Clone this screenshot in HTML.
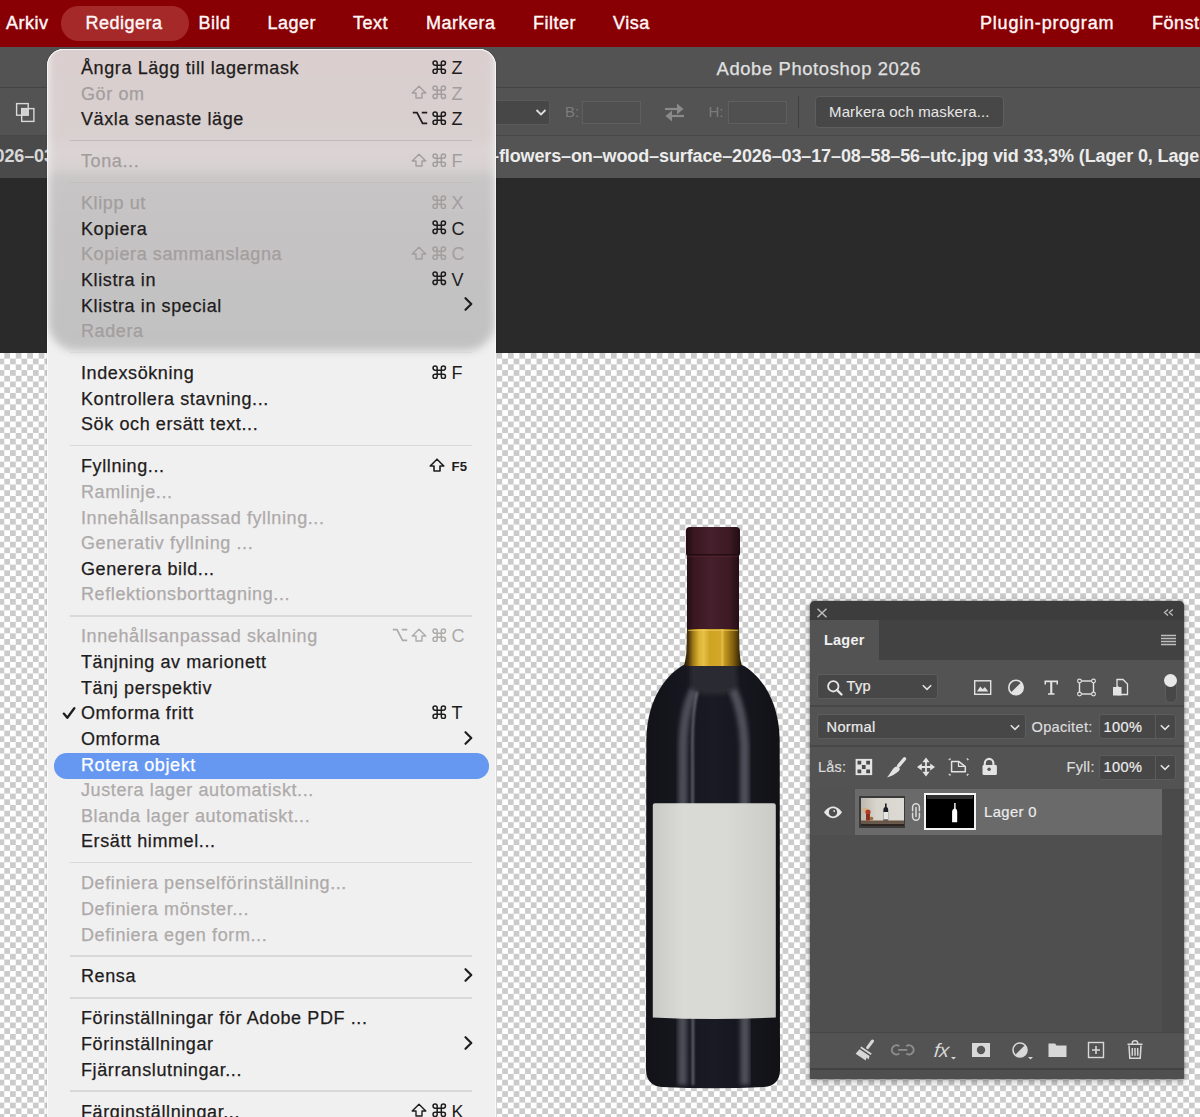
<!DOCTYPE html>
<html><head><meta charset="utf-8"><title>Photoshop</title>
<style>
*{margin:0;padding:0;box-sizing:border-box}
html,body{width:1200px;height:1117px;overflow:hidden;background:#282828}
body{position:relative;font-family:"Liberation Sans",sans-serif}
.a{position:absolute}
#menubar{left:0;top:0;width:1200px;height:47.5px;background:#890004;border-bottom:1.5px solid #6e0508}
.mb{position:absolute;top:11px;font-size:18px;line-height:24px;color:#fff7f7;letter-spacing:0.5px;white-space:nowrap;-webkit-text-stroke:0.4px #fff7f7}
#pill{left:60.5px;top:6.2px;width:128px;height:34.8px;border-radius:17.4px;background:#a52929}
#title{left:0;top:47px;width:1200px;height:41px;background:#535353;border-bottom:1.5px solid #444444}
#opts{left:0;top:88px;width:1200px;height:47.5px;background:#535353;border-bottom:1.5px solid #474747}
#tabs{left:0;top:135.5px;width:1200px;height:42.7px;background:#545454}
#canvas{left:0;top:178px;width:1200px;height:175px;background:#2a2a2a}
#checker{left:0;top:0;width:1200px;height:1117px}
#menu{left:46.5px;top:49px;width:449px;height:1100px;border-radius:17px;background:#f1f0f0;overflow:hidden;box-shadow:0 0 1.5px rgba(0,0,0,0.35)}
#rim{left:46.5px;top:49px;width:449px;height:1100px;border-radius:17px;box-shadow:inset 0 1px 0 0 rgba(255,255,255,0.75),inset 1px 0 0 0 rgba(255,255,255,0.6),inset -1px 0 0 0 rgba(255,255,255,0.6)}
.it{position:absolute;left:0;width:449px;height:0}
.it .t{position:absolute;left:34.5px;top:-19.24px;font-size:18px;line-height:26px;letter-spacing:0.6px;white-space:nowrap;-webkit-text-stroke:0.25px currentColor}
.it .k{position:absolute;top:-19.24px;font-size:18px;line-height:26px;white-space:nowrap}
.g{position:absolute}
.sep{position:absolute;left:23.5px;width:402px;height:1.5px;background:#d9d7d7}
.hl{position:absolute;left:7px;width:435px;height:25.7px;border-radius:12.5px;background:#6698f2}
</style></head><body>
<svg id="checker" class="a" width="1200" height="1117">
 <defs><pattern id="chk" patternUnits="userSpaceOnUse" x="-1.42" y="352.9" width="11.446" height="11.446">
  <rect width="11.446" height="11.446" fill="#ffffff"/>
  <rect x="5.723" width="5.723" height="5.723" fill="#cbcbcb"/>
  <rect y="5.723" width="5.723" height="5.723" fill="#cbcbcb"/>
 </pattern></defs>
 <rect x="0" y="352" width="1200" height="765" fill="url(#chk)"/>
</svg>
<div id="menubar" class="a"></div>
<div id="pill" class="a"></div>
<div class="mb" style="left:6px">Arkiv</div>
<div class="mb" style="left:85.5px">Redigera</div>
<div class="mb" style="left:198.5px">Bild</div>
<div class="mb" style="left:267.5px">Lager</div>
<div class="mb" style="left:353px">Text</div>
<div class="mb" style="left:426px">Markera</div>
<div class="mb" style="left:533px">Filter</div>
<div class="mb" style="left:613px">Visa</div>
<div class="mb" style="left:980px;letter-spacing:0.8px">Plugin-program</div>
<div class="mb" style="left:1152px">Fönster</div>

<div id="title" class="a"></div>
<div class="a" style="left:716.5px;top:57px;font-size:18.4px;line-height:24px;letter-spacing:0.62px;color:#e0e0e0;white-space:nowrap;-webkit-text-stroke:0.25px #e0e0e0">Adobe Photoshop 2026</div>
<div id="opts" class="a"></div>

<!-- options bar content -->
<svg class="a" style="left:14px;top:101px" width="23" height="23" viewBox="0 0 23 23">
 <rect x="7.7" y="7.6" width="6.5" height="6.5" fill="#cfcfcf"/>
 <rect x="2.6" y="2.6" width="11.6" height="11.6" fill="none" stroke="#d9d9d9" stroke-width="1.4"/>
 <rect x="7.7" y="7.6" width="12.2" height="12.8" fill="none" stroke="#d9d9d9" stroke-width="1.4"/>
</svg>
<div class="a" style="left:420px;top:99.7px;width:130px;height:25.5px;background:#474747;border:1px solid #5a5a5a;border-radius:3px"></div>
<svg class="a" style="left:535px;top:108px" width="12" height="9" viewBox="0 0 12 9"><path d="M1.5 2L6 6.5L10.5 2" fill="none" stroke="#dedede" stroke-width="1.8"/></svg>
<div class="a" style="left:565px;top:103px;font-size:15px;line-height:18px;color:#7c7c7c">B:</div>
<div class="a" style="left:582px;top:100.5px;width:59px;height:23px;border:1px solid #5f5f5f;background:#505050"></div>
<svg class="a" style="left:663px;top:102px" width="23" height="21" viewBox="0 0 23 21">
 <path d="M2 7H17" stroke="#8a8a8a" stroke-width="2.2"/><path d="M14 1.5L20.5 7L14 12.5Z" fill="#8a8a8a"/>
 <path d="M21 14H6" stroke="#8a8a8a" stroke-width="2.2"/><path d="M9 8.5L2.5 14L9 19.5Z" fill="#8a8a8a"/>
</svg>
<div class="a" style="left:708.5px;top:103px;font-size:15px;line-height:18px;color:#7c7c7c">H:</div>
<div class="a" style="left:728px;top:100.5px;width:58.5px;height:23px;border:1px solid #5f5f5f;background:#505050"></div>
<div class="a" style="left:798px;top:96px;width:1px;height:32px;background:#3f3f3f"></div>
<div class="a" style="left:814.5px;top:96px;width:189.5px;height:32px;background:#474747;border:1px solid #5e5e5e;border-radius:4px"></div>
<div class="a" style="left:829px;top:103px;font-size:15px;line-height:18px;letter-spacing:0.14px;color:#e8e8e8;white-space:nowrap">Markera och maskera...</div>
<div id="tabs" class="a"></div>
<div class="a" style="left:489px;top:145px;font-size:18px;line-height:22px;font-weight:700;letter-spacing:-0.12px;color:#ececec;white-space:nowrap">&#8211;flowers&#8211;on&#8211;wood&#8211;surface&#8211;2026&#8211;03&#8211;17&#8211;08&#8211;58&#8211;56&#8211;utc.jpg vid 33,3% (Lager 0, Lagermask/8)</div>
<div class="a" style="left:0;top:135.5px;width:120px;height:42.7px;background:#4a4a4a"></div>
<div class="a" style="left:-5.5px;top:145px;font-size:18px;line-height:22px;font-weight:700;letter-spacing:-0.12px;color:#d8d8d8;white-space:nowrap">026&#8211;03</div>
<div id="canvas" class="a"></div>


<svg class="a" style="left:0;top:0" width="1200" height="1117">
 <defs>
  <linearGradient id="cap" x1="0" x2="1" y1="0" y2="0">
   <stop offset="0" stop-color="#220c12"/><stop offset="0.15" stop-color="#3a1721"/><stop offset="0.45" stop-color="#46202c"/><stop offset="0.8" stop-color="#3d1a25"/><stop offset="1" stop-color="#220c12"/>
  </linearGradient>
  <linearGradient id="yel" x1="0" x2="1" y1="0" y2="0">
   <stop offset="0" stop-color="#1e1604"/><stop offset="0.08" stop-color="#4a360a"/><stop offset="0.16" stop-color="#a07a16"/><stop offset="0.26" stop-color="#dcb234"/><stop offset="0.34" stop-color="#e6c048"/><stop offset="0.45" stop-color="#cfa424"/><stop offset="0.63" stop-color="#d3a82a"/><stop offset="0.66" stop-color="#e2bf50"/><stop offset="0.7" stop-color="#c59a1e"/><stop offset="0.86" stop-color="#7a5a0e"/><stop offset="1" stop-color="#1c1404"/>
  </linearGradient>
  <linearGradient id="lab" x1="0" x2="1" y1="0" y2="0">
   <stop offset="0" stop-color="#c9cac6"/><stop offset="0.25" stop-color="#dadbd7"/><stop offset="0.6" stop-color="#d8d9d5"/><stop offset="1" stop-color="#cbccc8"/>
  </linearGradient>
  <linearGradient id="body" x1="0" x2="1" y1="0" y2="0">
   <stop offset="0" stop-color="#121218"/><stop offset="0.5" stop-color="#1a1a25"/><stop offset="1" stop-color="#111116"/>
  </linearGradient>
  <filter id="bl2" x="-50%" y="-10%" width="200%" height="120%"><feGaussianBlur stdDeviation="2.2"/></filter>
  <filter id="bl1" x="-50%" y="-10%" width="200%" height="120%"><feGaussianBlur stdDeviation="1"/></filter>
  <clipPath id="bclip"><path d="M683.7 665 C670 672 647 695 646.3 740 L646 1070 Q646.5 1085.5 662 1087 Q713 1089.5 764 1087 Q779.8 1085.5 780 1070 L779.7 740 C779 695 756 672 742 665 Z"/></clipPath>
 </defs>
 <path d="M683.7 665 C670 672 647 695 646.3 740 L646 1070 Q646.5 1085.5 662 1087 Q713 1089.5 764 1087 Q779.8 1085.5 780 1070 L779.7 740 C779 695 756 672 742 665 Z" fill="url(#body)"/>
 <g clip-path="url(#bclip)">
  <path d="M690 662 Q712 660 736 662 L738 690 Q713 700 690 690 Z" fill="#2b2a30" filter="url(#bl2)"/>
  <path d="M694 690 Q684 710 683 745 L682.5 1085" fill="none" stroke="#4e4e58" stroke-width="9" filter="url(#bl2)"/>
  <path d="M697 692 Q692 715 692.5 750 L693 1085" fill="none" stroke="#6a6a74" stroke-width="2.2" filter="url(#bl1)"/>
  <path d="M733 690 Q743 712 744.5 745 L745 1085" fill="none" stroke="#50505a" stroke-width="9" filter="url(#bl2)"/>
  
 </g>
 <path d="M687 628 L739 628 L739.5 650 Q740 660 742 666 L683.7 666 Q686 660 686.5 650 Z" fill="url(#yel)"/>
 <path d="M688 630.5 H738" stroke="#f0d060" stroke-width="1" opacity="0.6"/>
 <path d="M686 530.5 Q686 527 690 527 L736 527 Q740 527 740 530.5 L740 554 L739 556 L739 629 L687 629 L687 556 L686 554 Z" fill="url(#cap)"/>
 <path d="M687 554.8 H739" stroke="#1e0a10" stroke-width="1.3"/>
 <path d="M687 556.3 H739" stroke="#5a2a36" stroke-width="0.8" opacity="0.7"/>
 <path d="M652.8 805.5 Q652.8 803.3 655 803.3 L773.5 803.3 Q775.8 803.3 775.8 805.5 L775.8 1017.5 Q714 1020.5 652.8 1017.5 Z" fill="url(#lab)"/>
</svg>

<div class="a" style="left:809.5px;top:601.3px;width:374px;height:478.2px;border-radius:5px 5px 1.5px 1.5px;background:#535353;box-shadow:0 0 2px rgba(0,0,0,0.55),0 2px 8px rgba(0,0,0,0.3);overflow:hidden">
 <div class="a" style="left:0;top:0;width:374px;height:19px;background:#3d3d3d"></div>
 <div class="a" style="left:69px;top:19px;width:305px;height:40px;background:#424242"></div>
 <div class="a" style="left:0;top:103.7px;width:374px;height:2px;background:#474747"></div>
 <div class="a" style="left:0;top:144px;width:374px;height:2px;background:#474747"></div>
 <div class="a" style="left:0;top:187.7px;width:374px;height:243px;background:#4f4f4f"></div>
 <div class="a" style="left:0;top:187.7px;width:45px;height:46px;background:#525252"></div>
 <div class="a" style="left:45px;top:187.7px;width:307px;height:46px;background:#6a6a6a"></div>
 <div class="a" style="left:352px;top:187.7px;width:22px;height:243px;background:#4a4a4a"></div>
 <div class="a" style="left:0;top:430.5px;width:374px;height:38px;background:#535353;border-top:1.5px solid #464646;border-bottom:2px solid #424242"></div>
 <div class="a" style="left:0;top:468.5px;width:374px;height:10px;background:#4f4f4f"></div>
</div>
<svg class="a" style="left:816px;top:607px" width="12" height="12" viewBox="0 0 12 12"><path d="M1.5 1.7L10.5 10.3M10.5 1.7L1.5 10.3" stroke="#bdbdbd" stroke-width="1.5"/></svg>
<svg class="a" style="left:1163px;top:608px" width="11" height="9" viewBox="0 0 11 9"><path d="M5 1.5L1.5 4.5L5 7.5M9.8 1.5L6.3 4.5L9.8 7.5" fill="none" stroke="#bdbdbd" stroke-width="1.3"/></svg>
<div class="a" style="left:824px;top:632px;font-size:14.5px;line-height:17px;font-weight:700;color:#f0f0f0;letter-spacing:0.2px">Lager</div>
<svg class="a" style="left:1160px;top:634px" width="17" height="13" viewBox="0 0 17 13"><path d="M1 1.5H16M1 4.5H16M1 7.5H16M1 10.5H16" stroke="#bfbfbf" stroke-width="1.3"/></svg>

<div class="a" style="left:816.5px;top:673.8px;width:121px;height:25.5px;background:#474747;border:1px solid #5c5c5c;border-radius:3px"></div>
<svg class="a" style="left:826px;top:679px" width="18" height="18" viewBox="0 0 18 18"><circle cx="7.3" cy="7.3" r="5.2" fill="none" stroke="#e6e6e6" stroke-width="1.8"/><path d="M11 11L15.5 15.5" stroke="#e6e6e6" stroke-width="2.4" stroke-linecap="round"/></svg>
<div class="a" style="left:846.5px;top:678px;font-size:14.6px;line-height:17px;color:#ececec;letter-spacing:0.3px;-webkit-text-stroke:0.2px currentColor">Typ</div>
<svg class="a" style="left:921px;top:683px" width="12" height="9" viewBox="0 0 12 9"><path d="M1.8 2.2L6 6.4L10.2 2.2" fill="none" stroke="#e0e0e0" stroke-width="1.6"/></svg>
<svg class="a" style="left:972px;top:678px" width="160" height="20" viewBox="0 0 160 20">
 <rect x="2.7" y="2.8" width="16" height="13.5" fill="none" stroke="#e3e3e3" stroke-width="1.4"/>
 <path d="M5 13.5L8.3 8.5L10.7 11.3L12.8 9L16.3 13.5Z" fill="#e3e3e3"/>
 <circle cx="44" cy="9.5" r="7.2" fill="none" stroke="#e3e3e3" stroke-width="1.6"/>
 <path d="M49.1 4.4A7.2 7.2 0 0 1 38.9 14.6Z" fill="#e3e3e3"/>
 <path d="M72.5 2.5H86V6.5H84.5V4.3H80.3V15.3H82.5V16.8H76V15.3H78.2V4.3H74V6.5H72.5Z" fill="#e3e3e3"/>
 <rect x="107.5" y="3" width="14" height="13" fill="none" stroke="#e3e3e3" stroke-width="1.4"/>
 <circle cx="107.5" cy="3" r="1.9" fill="#535353" stroke="#e3e3e3" stroke-width="1.1"/>
 <circle cx="121.5" cy="3" r="1.9" fill="#535353" stroke="#e3e3e3" stroke-width="1.1"/>
 <circle cx="107.5" cy="16" r="1.9" fill="#535353" stroke="#e3e3e3" stroke-width="1.1"/>
 <circle cx="121.5" cy="16" r="1.9" fill="#535353" stroke="#e3e3e3" stroke-width="1.1"/>
 <path d="M145 1.5H151L155.5 6V16.5H146V9H145Z" fill="none" stroke="#e3e3e3" stroke-width="1.3"/>
 <rect x="141" y="9" width="8.5" height="8.5" fill="#e3e3e3"/>
</svg>
<div class="a" style="left:1164.5px;top:674.5px;width:12.5px;height:28px;border-radius:6.5px;background:#474747;border:1px solid #5c5c5c"></div>
<div class="a" style="left:1164px;top:674px;width:13px;height:13px;border-radius:50%;background:#e8e8e8"></div>

<div class="a" style="left:817px;top:714px;width:209px;height:25px;background:#474747;border:1px solid #5c5c5c;border-radius:3px"></div>
<div class="a" style="left:826.5px;top:718.5px;font-size:14.6px;line-height:17px;color:#ececec;letter-spacing:0.35px;-webkit-text-stroke:0.2px currentColor">Normal</div>
<svg class="a" style="left:1009px;top:723px" width="12" height="9" viewBox="0 0 12 9"><path d="M1.8 2.2L6 6.4L10.2 2.2" fill="none" stroke="#e0e0e0" stroke-width="1.6"/></svg>
<div class="a" style="left:1031.5px;top:718.5px;font-size:14.6px;line-height:17px;color:#dcdcdc;letter-spacing:0.3px;-webkit-text-stroke:0.2px currentColor">Opacitet:</div>
<div class="a" style="left:1099px;top:714px;width:76.5px;height:25px;background:#474747;border:1px solid #5c5c5c;border-radius:3px"></div>
<div class="a" style="left:1154.5px;top:715px;width:1px;height:23px;background:#5c5c5c"></div>
<div class="a" style="left:1103.5px;top:718.5px;font-size:14.6px;line-height:17px;color:#ececec;letter-spacing:0.35px;-webkit-text-stroke:0.2px currentColor">100%</div>
<svg class="a" style="left:1159px;top:723px" width="12" height="9" viewBox="0 0 12 9"><path d="M1.8 2.2L6 6.4L10.2 2.2" fill="none" stroke="#e0e0e0" stroke-width="1.6"/></svg>

<div class="a" style="left:818px;top:758.5px;font-size:14.4px;line-height:17px;color:#dcdcdc;letter-spacing:0.3px;-webkit-text-stroke:0.2px currentColor">Lås:</div>
<svg class="a" style="left:853px;top:756px" width="148" height="23" viewBox="0 0 148 23">
 <rect x="2.6" y="2.9" width="16.6" height="16.2" fill="#e3e3e3"/>
 <path d="M4.5 4.75h3.75v3.75h-3.75zM13.25 4.75h3.75v3.75h-3.75zM8.9 9.1h3.7v3.8h-3.7zM4.5 13.5h3.75v3.75h-3.75zM13.25 13.5h3.75v3.75h-3.75z" fill="#4a4a4a"/>
 <path d="M51.5 2.8L45.8 9.6" stroke="#e3e3e3" stroke-width="3.4" stroke-linecap="round"/>
 <path d="M46.6 12.2C45.2 9.8 42.4 10.2 40.6 12.2C38.6 14.6 36.4 18.4 34 21.6C37.6 20.4 41.4 18.8 44 16.6C46 14.8 47.4 13.6 46.6 12.2Z" fill="#e3e3e3"/>
 <path d="M73 5V17M67 11H79" stroke="#e3e3e3" stroke-width="1.8"/>
 <path d="M69.4 6.2L73 1.6L76.6 6.2ZM69.4 15.8L73 20.4L76.6 15.8ZM68.8 7.4L64 11L68.8 14.6ZM77.2 7.4L82 11L77.2 14.6Z" fill="#e3e3e3"/>
 <path d="M98.6 5.6H106L112.3 10.6V15.8H98.6Z" fill="none" stroke="#e3e3e3" stroke-width="1.5" stroke-linejoin="round"/>
 <path d="M105.5 6V10.3H112" fill="none" stroke="#e3e3e3" stroke-width="1.2"/>
 <path d="M95.5 3.6H97.3M97 2V4.2M114 3.6H115.8M114.3 2V4.2M95.5 18.4H97.3M97 17.8V20M114 18.4H115.8M114.3 17.8V20" stroke="#d0d0d0" stroke-width="1"/>
 <path d="M131.8 10V7.2A4.3 4.3 0 0 1 140.4 7.2V10" fill="none" stroke="#e3e3e3" stroke-width="2.1"/>
 <rect x="129.5" y="9.1" width="14.4" height="10" rx="1.3" fill="#e3e3e3"/>
 <circle cx="136.1" cy="13.3" r="1.7" fill="#535353"/>
</svg>
<div class="a" style="left:1066.5px;top:758.5px;font-size:14.6px;line-height:17px;color:#dcdcdc;letter-spacing:0.3px;-webkit-text-stroke:0.2px currentColor">Fyll:</div>
<div class="a" style="left:1099px;top:754.5px;width:76.5px;height:25px;background:#474747;border:1px solid #5c5c5c;border-radius:3px"></div>
<div class="a" style="left:1154.5px;top:755.5px;width:1px;height:23px;background:#5c5c5c"></div>
<div class="a" style="left:1103.5px;top:758.5px;font-size:14.6px;line-height:17px;color:#ececec;letter-spacing:0.35px;-webkit-text-stroke:0.2px currentColor">100%</div>
<svg class="a" style="left:1159px;top:763px" width="12" height="9" viewBox="0 0 12 9"><path d="M1.8 2.2L6 6.4L10.2 2.2" fill="none" stroke="#e0e0e0" stroke-width="1.6"/></svg>

<svg class="a" style="left:822.5px;top:805px" width="20" height="15" viewBox="0 0 20 15"><path d="M1 7.3C4 3 7.5 1.5 10 1.5S16 3 19 7.3C16 11.6 12.5 13.2 10 13.2S4 11.6 1 7.3Z" fill="#e6e6e6"/><circle cx="10" cy="7.3" r="4.1" fill="#4e4e4e"/><circle cx="11.2" cy="6" r="0.9" fill="#e6e6e6"/></svg>
<div class="a" style="left:859.3px;top:796px;width:46px;height:31.6px;background:#3a3a3a"></div>
<svg class="a" style="left:861px;top:797.5px" width="43" height="28.5" viewBox="0 0 43 28.5">
 <defs><linearGradient id="wall" x1="0" x2="1" y1="0" y2="0"><stop offset="0" stop-color="#bdb8ae"/><stop offset="0.35" stop-color="#d7d4cc"/><stop offset="1" stop-color="#dcdad4"/></linearGradient></defs>
 <rect width="43" height="28.5" fill="url(#wall)"/>
 <rect y="22.5" width="43" height="3" fill="#6b5646"/>
 <rect y="25.5" width="43" height="3" fill="#2e2520"/>
 <path d="M24 5.5h1.6v3.5q1.6 0.8 1.6 2.5v11h-4.8v-11q0-1.7 1.6-2.5z" fill="#1e1d2a"/>
 <rect x="22.4" y="14" width="4.8" height="7.5" fill="#e6e6e4"/>
 <circle cx="4" cy="12" r="2.5" fill="#d9b070" opacity="0.8"/>
 <circle cx="7" cy="14" r="2.6" fill="#b23a28"/>
 <path d="M5 16h4v6.5h-4z" fill="#8a3020"/>
 <circle cx="10.5" cy="20.5" r="1.8" fill="#a06a3a"/>
</svg>
<svg class="a" style="left:908.5px;top:801px" width="14" height="22" viewBox="0 0 14 22"><path d="M3.6 9.8V6.2A3.4 3.4 0 0 1 10.4 6.2V9.8M3.6 12.2V15.8A3.4 3.4 0 0 0 10.4 15.8V12.2M7 6.5V15.5" fill="none" stroke="#dadada" stroke-width="1.5" stroke-linecap="round"/></svg>
<div class="a" style="left:924.1px;top:792.6px;width:51.9px;height:37.9px;background:#000;border:2.6px solid #f4f4f4"></div>
<div class="a" style="left:926.7px;top:795.2px;width:46.7px;height:3.5px;background:#2e2e2e"></div>
<svg class="a" style="left:951px;top:802px" width="8" height="22" viewBox="0 0 8 22"><path d="M3.2 1H4.6V6.5Q6.2 7.5 6.2 9.5V20.3H1.1V9.5Q1.1 7.5 3.2 6.5Z" fill="#ffffff"/></svg>
<div class="a" style="left:984px;top:803.5px;font-size:14.8px;line-height:17px;color:#ececec;letter-spacing:0.4px;-webkit-text-stroke:0.2px currentColor">Lager 0</div>

<svg class="a" style="left:850px;top:1038px" width="300" height="24" viewBox="0 0 300 24">
 <path d="M22.5 3L17.6 9.6" stroke="#d8d8d8" stroke-width="3" stroke-linecap="round"/>
 <path d="M10.8 9.2L21.2 16.2" stroke="#d8d8d8" stroke-width="1.7"/>
 <path d="M9.6 11.2L19.6 18L18.6 21.6L16.6 19.6L15.8 22.6L5.6 15.8Z" fill="#d8d8d8"/>
 <path d="M49.2 8.2A4.6 4.6 0 1 0 49.2 15.6M56.3 8.2A4.6 4.6 0 1 1 56.3 15.6M48.2 11.9H57.3" fill="none" stroke="#8f8f8f" stroke-width="1.9"/>
 <text x="83.5" y="19.5" font-family="Liberation Sans" font-style="italic" font-size="19.5" fill="#d8d8d8" transform="skewX(-6) translate(2,0)">fx</text>
 <path d="M101 19H106L103.5 21.5Z" fill="#d8d8d8"/>
 <rect x="122" y="5" width="18" height="14" fill="#d8d8d8"/>
 <circle cx="131" cy="12" r="4.2" fill="#565656"/>
 <circle cx="170" cy="12" r="7" fill="none" stroke="#d8d8d8" stroke-width="1.6"/>
 <path d="M175 7A7 7 0 0 1 165 17Z" fill="#d8d8d8"/>
 <path d="M178 19H183L180.5 21.5Z" fill="#d8d8d8"/>
 <path d="M198.5 5.5H205L206.5 7.5H216.5V19H198.5Z" fill="#d8d8d8"/>
 <rect x="238.5" y="4.5" width="15" height="15" fill="none" stroke="#d8d8d8" stroke-width="1.4"/>
 <path d="M246 8V16M242 12H250" stroke="#d8d8d8" stroke-width="1.6"/>
 <path d="M277.5 6.3H292.5M282.3 6.3V5A2.7 2.2 0 0 1 287.7 5V6.3M279 7.5L279.8 20.2H290.2L291 7.5M282.3 10V17.8M285 10V17.8M287.7 10V17.8" fill="none" stroke="#d8d8d8" stroke-width="1.5"/>
</svg>
<div id="menu" class="a">
<div class="a" style="left:0;top:-10px;width:449px;height:313px;filter:blur(3.5px);border-radius:17px 17px 30px 30px;background:linear-gradient(to bottom,#dacece 10px,#d8cfcf 96px,#dcd4d4 108px,#d9d2d2 128px,#c7c5c5 140px,#c4c2c2 200px,#c3c2c2 261px,#c2c1c1 311px);box-shadow:inset 0 0 6px 3px rgba(255,255,255,0.35)"></div>
<div class="it" style="top:25.30px;color:#1e1c1c"><span class="t">Ångra Lägg till lagermask</span><svg class="g" style="left:385.6px;top:-14.8px;width:14.5px;height:14.5px" viewBox="0 0 14 14"><path d="M5 5V3A2 2 0 1 0 3 5H11A2 2 0 1 0 9 3V11A2 2 0 1 0 11 9H3A2 2 0 1 0 5 11Z" fill="none" stroke="#1e1c1c" stroke-width="1.45"/></svg><span class="k" style="left:405px">Z</span></div>
<div class="it dis" style="top:50.93px;color:#a29e9e"><span class="t">Gör om</span><svg class="g" style="left:364.8px;top:-14.8px;width:16px;height:14px" viewBox="0 0 16 14"><path d="M8 1.2L14.8 8H11V13H5V8H1.2Z" fill="none" stroke="#a29e9e" stroke-width="1.4" stroke-linejoin="round"/></svg><svg class="g" style="left:385.6px;top:-14.8px;width:14.5px;height:14.5px" viewBox="0 0 14 14"><path d="M5 5V3A2 2 0 1 0 3 5H11A2 2 0 1 0 9 3V11A2 2 0 1 0 11 9H3A2 2 0 1 0 5 11Z" fill="none" stroke="#a29e9e" stroke-width="1.45"/></svg><span class="k" style="left:405px">Z</span></div>
<div class="it" style="top:76.56px;color:#1e1c1c"><span class="t">Växla senaste läge</span><svg class="g" style="left:365px;top:-14.3px;width:16px;height:14px" viewBox="0 0 16 14"><path d="M0.8 1.7H5L10.6 12.4H15.2M9.8 1.7H15.2" fill="none" stroke="#1e1c1c" stroke-width="1.7"/></svg><svg class="g" style="left:385.6px;top:-14.8px;width:14.5px;height:14.5px" viewBox="0 0 14 14"><path d="M5 5V3A2 2 0 1 0 3 5H11A2 2 0 1 0 9 3V11A2 2 0 1 0 11 9H3A2 2 0 1 0 5 11Z" fill="none" stroke="#1e1c1c" stroke-width="1.45"/></svg><span class="k" style="left:405px">Z</span></div>
<div class="sep" style="top:90.86px;background:#c2bdbd"></div>
<div class="it dis" style="top:118.46px;color:#a29e9e"><span class="t">Tona...</span><svg class="g" style="left:364.8px;top:-14.8px;width:16px;height:14px" viewBox="0 0 16 14"><path d="M8 1.2L14.8 8H11V13H5V8H1.2Z" fill="none" stroke="#a29e9e" stroke-width="1.4" stroke-linejoin="round"/></svg><svg class="g" style="left:385.6px;top:-14.8px;width:14.5px;height:14.5px" viewBox="0 0 14 14"><path d="M5 5V3A2 2 0 1 0 3 5H11A2 2 0 1 0 9 3V11A2 2 0 1 0 11 9H3A2 2 0 1 0 5 11Z" fill="none" stroke="#a29e9e" stroke-width="1.45"/></svg><span class="k" style="left:405px">F</span></div>
<div class="sep" style="top:132.76px;background:#c2bdbd"></div>
<div class="it dis" style="top:160.36px;color:#a29e9e"><span class="t">Klipp ut</span><svg class="g" style="left:385.6px;top:-14.8px;width:14.5px;height:14.5px" viewBox="0 0 14 14"><path d="M5 5V3A2 2 0 1 0 3 5H11A2 2 0 1 0 9 3V11A2 2 0 1 0 11 9H3A2 2 0 1 0 5 11Z" fill="none" stroke="#a29e9e" stroke-width="1.45"/></svg><span class="k" style="left:405px">X</span></div>
<div class="it" style="top:185.99px;color:#1e1c1c"><span class="t">Kopiera</span><svg class="g" style="left:385.6px;top:-14.8px;width:14.5px;height:14.5px" viewBox="0 0 14 14"><path d="M5 5V3A2 2 0 1 0 3 5H11A2 2 0 1 0 9 3V11A2 2 0 1 0 11 9H3A2 2 0 1 0 5 11Z" fill="none" stroke="#1e1c1c" stroke-width="1.45"/></svg><span class="k" style="left:405px">C</span></div>
<div class="it dis" style="top:211.62px;color:#a29e9e"><span class="t">Kopiera sammanslagna</span><svg class="g" style="left:364.8px;top:-14.8px;width:16px;height:14px" viewBox="0 0 16 14"><path d="M8 1.2L14.8 8H11V13H5V8H1.2Z" fill="none" stroke="#a29e9e" stroke-width="1.4" stroke-linejoin="round"/></svg><svg class="g" style="left:385.6px;top:-14.8px;width:14.5px;height:14.5px" viewBox="0 0 14 14"><path d="M5 5V3A2 2 0 1 0 3 5H11A2 2 0 1 0 9 3V11A2 2 0 1 0 11 9H3A2 2 0 1 0 5 11Z" fill="none" stroke="#a29e9e" stroke-width="1.45"/></svg><span class="k" style="left:405px">C</span></div>
<div class="it" style="top:237.25px;color:#1e1c1c"><span class="t">Klistra in</span><svg class="g" style="left:385.6px;top:-14.8px;width:14.5px;height:14.5px" viewBox="0 0 14 14"><path d="M5 5V3A2 2 0 1 0 3 5H11A2 2 0 1 0 9 3V11A2 2 0 1 0 11 9H3A2 2 0 1 0 5 11Z" fill="none" stroke="#1e1c1c" stroke-width="1.45"/></svg><span class="k" style="left:405px">V</span></div>
<div class="it" style="top:262.88px;color:#1e1c1c"><span class="t">Klistra in special</span><svg class="g" style="left:417px;top:-14.6px;width:9px;height:14px" viewBox="0 0 9 14"><path d="M1.5 1.2L7.3 7L1.5 12.8" fill="none" stroke="#1e1c1c" stroke-width="2.1" stroke-linecap="round" stroke-linejoin="round"/></svg></div>
<div class="it dis" style="top:288.51px;color:#a29e9e"><span class="t">Radera</span></div>
<div class="sep" style="top:302.81px;background:#dad8d8"></div>
<div class="it" style="top:330.41px;color:#1e1c1c"><span class="t">Indexsökning</span><svg class="g" style="left:385.6px;top:-14.8px;width:14.5px;height:14.5px" viewBox="0 0 14 14"><path d="M5 5V3A2 2 0 1 0 3 5H11A2 2 0 1 0 9 3V11A2 2 0 1 0 11 9H3A2 2 0 1 0 5 11Z" fill="none" stroke="#1e1c1c" stroke-width="1.45"/></svg><span class="k" style="left:405px">F</span></div>
<div class="it" style="top:356.04px;color:#1e1c1c"><span class="t">Kontrollera stavning...</span></div>
<div class="it" style="top:381.67px;color:#1e1c1c"><span class="t">Sök och ersätt text...</span></div>
<div class="sep" style="top:395.97px;background:#dad8d8"></div>
<div class="it" style="top:423.57px;color:#1e1c1c"><span class="t">Fyllning...</span><svg class="g" style="left:382.7px;top:-15px;width:16px;height:14px" viewBox="0 0 16 14"><path d="M8 1.2L14.8 8H11V13H5V8H1.2Z" fill="none" stroke="#1e1c1c" stroke-width="1.6" stroke-linejoin="round"/></svg><span class="k" style="left:405px;font-size:13.2px;font-weight:700;top:-18.4px;letter-spacing:0.3px">F5</span></div>
<div class="it dis" style="top:449.20px;color:#adaaaa"><span class="t">Ramlinje...</span></div>
<div class="it dis" style="top:474.83px;color:#adaaaa"><span class="t">Innehållsanpassad fyllning...</span></div>
<div class="it dis" style="top:500.46px;color:#adaaaa"><span class="t">Generativ fyllning ...</span></div>
<div class="it" style="top:526.09px;color:#1e1c1c"><span class="t">Generera bild...</span></div>
<div class="it dis" style="top:551.72px;color:#adaaaa"><span class="t">Reflektionsborttagning...</span></div>
<div class="sep" style="top:566.02px;background:#dad8d8"></div>
<div class="it dis" style="top:593.62px;color:#adaaaa"><span class="t">Innehållsanpassad skalning</span><svg class="g" style="left:345.3px;top:-14.3px;width:16px;height:14px" viewBox="0 0 16 14"><path d="M0.8 1.7H5L10.6 12.4H15.2M9.8 1.7H15.2" fill="none" stroke="#adaaaa" stroke-width="1.7"/></svg><svg class="g" style="left:364.8px;top:-14.8px;width:16px;height:14px" viewBox="0 0 16 14"><path d="M8 1.2L14.8 8H11V13H5V8H1.2Z" fill="none" stroke="#adaaaa" stroke-width="1.4" stroke-linejoin="round"/></svg><svg class="g" style="left:385.6px;top:-14.8px;width:14.5px;height:14.5px" viewBox="0 0 14 14"><path d="M5 5V3A2 2 0 1 0 3 5H11A2 2 0 1 0 9 3V11A2 2 0 1 0 11 9H3A2 2 0 1 0 5 11Z" fill="none" stroke="#adaaaa" stroke-width="1.45"/></svg><span class="k" style="left:405px">C</span></div>
<div class="it" style="top:619.25px;color:#1e1c1c"><span class="t">Tänjning av marionett</span></div>
<div class="it" style="top:644.88px;color:#1e1c1c"><span class="t">Tänj perspektiv</span></div>
<div class="it" style="top:670.51px;color:#1e1c1c"><span class="t">Omforma fritt</span><svg class="g" style="left:385.6px;top:-14.8px;width:14.5px;height:14.5px" viewBox="0 0 14 14"><path d="M5 5V3A2 2 0 1 0 3 5H11A2 2 0 1 0 9 3V11A2 2 0 1 0 11 9H3A2 2 0 1 0 5 11Z" fill="none" stroke="#1e1c1c" stroke-width="1.45"/></svg><span class="k" style="left:405px">T</span><svg class="g" style="left:15.0px;top:-12.8px;width:15px;height:13px" viewBox="0 0 15 13"><path d="M1.8 6.6L5.3 10.8L12.3 1.3" fill="none" stroke="#1e1c1c" stroke-width="2.3" stroke-linecap="round" stroke-linejoin="round"/></svg></div>
<div class="it" style="top:696.14px;color:#1e1c1c"><span class="t">Omforma</span><svg class="g" style="left:417px;top:-14.6px;width:9px;height:14px" viewBox="0 0 9 14"><path d="M1.5 1.2L7.3 7L1.5 12.8" fill="none" stroke="#1e1c1c" stroke-width="2.1" stroke-linecap="round" stroke-linejoin="round"/></svg></div>
<div class="hl" style="top:703.90px"></div>
<div class="it sel" style="top:721.77px;color:#ffffff"><span class="t">Rotera objekt</span></div>
<div class="it dis" style="top:747.40px;color:#adaaaa"><span class="t">Justera lager automatiskt...</span></div>
<div class="it dis" style="top:773.03px;color:#adaaaa"><span class="t">Blanda lager automatiskt...</span></div>
<div class="it" style="top:798.66px;color:#1e1c1c"><span class="t">Ersätt himmel...</span></div>
<div class="sep" style="top:812.96px;background:#dad8d8"></div>
<div class="it dis" style="top:840.56px;color:#adaaaa"><span class="t">Definiera penselförinställning...</span></div>
<div class="it dis" style="top:866.19px;color:#adaaaa"><span class="t">Definiera mönster...</span></div>
<div class="it dis" style="top:891.82px;color:#adaaaa"><span class="t">Definiera egen form...</span></div>
<div class="sep" style="top:906.12px;background:#dad8d8"></div>
<div class="it" style="top:933.72px;color:#1e1c1c"><span class="t">Rensa</span><svg class="g" style="left:417px;top:-14.6px;width:9px;height:14px" viewBox="0 0 9 14"><path d="M1.5 1.2L7.3 7L1.5 12.8" fill="none" stroke="#1e1c1c" stroke-width="2.1" stroke-linecap="round" stroke-linejoin="round"/></svg></div>
<div class="sep" style="top:948.02px;background:#dad8d8"></div>
<div class="it" style="top:975.62px;color:#1e1c1c"><span class="t">Förinställningar för Adobe PDF ...</span></div>
<div class="it" style="top:1001.25px;color:#1e1c1c"><span class="t">Förinställningar</span><svg class="g" style="left:417px;top:-14.6px;width:9px;height:14px" viewBox="0 0 9 14"><path d="M1.5 1.2L7.3 7L1.5 12.8" fill="none" stroke="#1e1c1c" stroke-width="2.1" stroke-linecap="round" stroke-linejoin="round"/></svg></div>
<div class="it" style="top:1026.88px;color:#1e1c1c"><span class="t">Fjärranslutningar...</span></div>
<div class="sep" style="top:1041.18px;background:#dad8d8"></div>
<div class="it" style="top:1068.78px;color:#1e1c1c"><span class="t">Färginställningar...</span><svg class="g" style="left:364.8px;top:-14.8px;width:16px;height:14px" viewBox="0 0 16 14"><path d="M8 1.2L14.8 8H11V13H5V8H1.2Z" fill="none" stroke="#1e1c1c" stroke-width="1.4" stroke-linejoin="round"/></svg><svg class="g" style="left:385.6px;top:-14.8px;width:14.5px;height:14.5px" viewBox="0 0 14 14"><path d="M5 5V3A2 2 0 1 0 3 5H11A2 2 0 1 0 9 3V11A2 2 0 1 0 11 9H3A2 2 0 1 0 5 11Z" fill="none" stroke="#1e1c1c" stroke-width="1.45"/></svg><span class="k" style="left:405px">K</span></div>
</div>
<div id="rim" class="a"></div>
</body></html>
